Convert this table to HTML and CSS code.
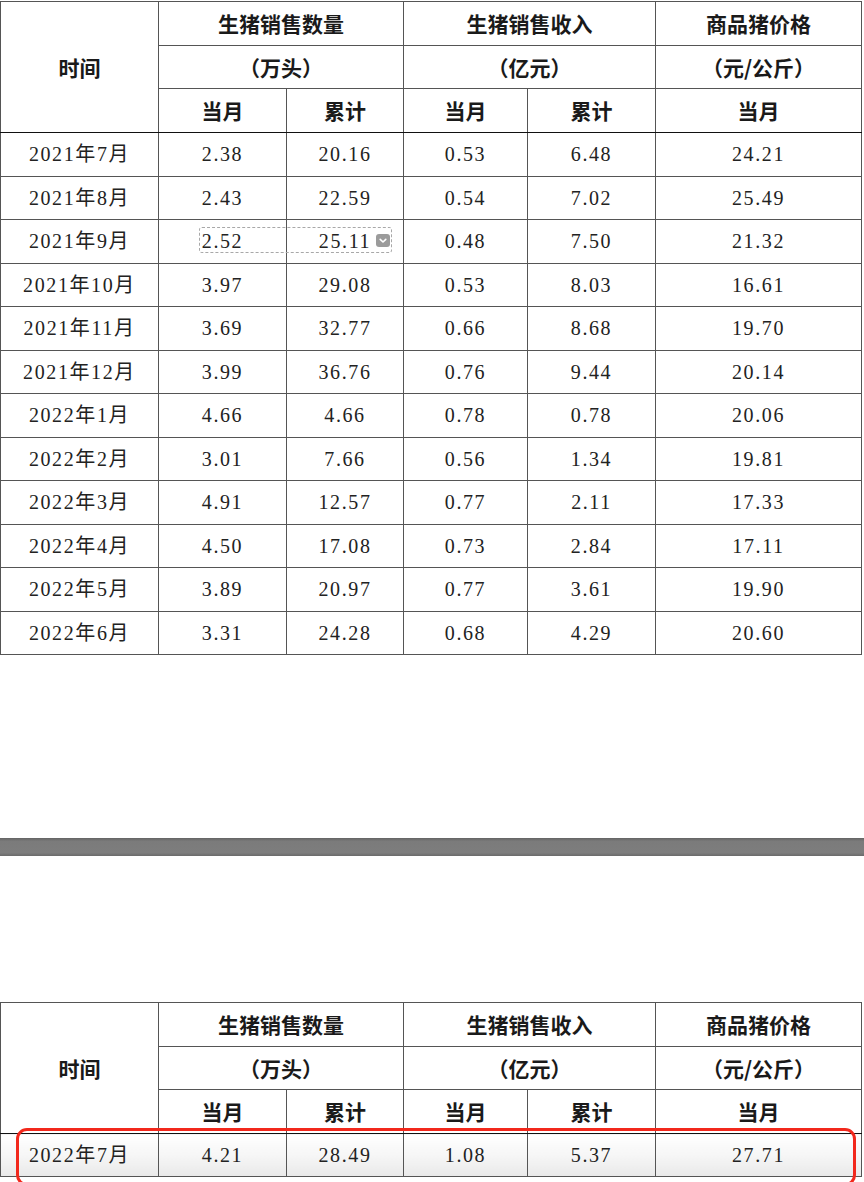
FILE: index.html
```html
<!DOCTYPE html>
<html lang="zh-CN">
<head>
<meta charset="utf-8">
<title>生猪销售情况</title>
<link rel="stylesheet" href="styles.css">
</head>
<body>
<div class="page">
  <div class="sheet sheet-top">
    <table class="grid">
      <colgroup>
        <col class="c-time"><col class="c-a"><col class="c-b"><col class="c-c"><col class="c-d"><col class="c-e">
      </colgroup>
      <thead>
        <tr class="h1"><th rowspan="3">时间</th><th colspan="2">生猪销售数量</th><th colspan="2">生猪销售收入</th><th>商品猪价格</th></tr>
        <tr class="h2"><th colspan="2">（万头）</th><th colspan="2">（亿元）</th><th>（元/公斤）</th></tr>
        <tr class="h3"><th>当月</th><th>累计</th><th>当月</th><th>累计</th><th>当月</th></tr>
      </thead>
      <tbody>
        <tr><td>2021年7月</td><td>2.38</td><td>20.16</td><td>0.53</td><td>6.48</td><td>24.21</td></tr>
        <tr><td>2021年8月</td><td>2.43</td><td>22.59</td><td>0.54</td><td>7.02</td><td>25.49</td></tr>
        <tr><td>2021年9月</td><td>2.52</td><td>25.11</td><td>0.48</td><td>7.50</td><td>21.32</td></tr>
        <tr><td>2021年10月</td><td>3.97</td><td>29.08</td><td>0.53</td><td>8.03</td><td>16.61</td></tr>
        <tr><td>2021年11月</td><td>3.69</td><td>32.77</td><td>0.66</td><td>8.68</td><td>19.70</td></tr>
        <tr><td>2021年12月</td><td>3.99</td><td>36.76</td><td>0.76</td><td>9.44</td><td>20.14</td></tr>
        <tr><td>2022年1月</td><td>4.66</td><td>4.66</td><td>0.78</td><td>0.78</td><td>20.06</td></tr>
        <tr><td>2022年2月</td><td>3.01</td><td>7.66</td><td>0.56</td><td>1.34</td><td>19.81</td></tr>
        <tr><td>2022年3月</td><td>4.91</td><td>12.57</td><td>0.77</td><td>2.11</td><td>17.33</td></tr>
        <tr><td>2022年4月</td><td>4.50</td><td>17.08</td><td>0.73</td><td>2.84</td><td>17.11</td></tr>
        <tr><td>2022年5月</td><td>3.89</td><td>20.97</td><td>0.77</td><td>3.61</td><td>19.90</td></tr>
        <tr><td>2022年6月</td><td>3.31</td><td>24.28</td><td>0.68</td><td>4.29</td><td>20.60</td></tr>
      </tbody>
    </table>
    <div class="select-box">
      <span class="dropdown"><svg viewBox="0 0 14 13" width="14" height="13"><path d="M4.2 5.3 L7 8 L9.8 5.3" fill="none" stroke="#fff" stroke-width="1.6" stroke-linecap="round" stroke-linejoin="round"/></svg></span>
    </div>
  </div>

  <div class="divider"></div>

  <div class="sheet sheet-bottom">
    <table class="grid">
      <colgroup>
        <col class="c-time"><col class="c-a"><col class="c-b"><col class="c-c"><col class="c-d"><col class="c-e">
      </colgroup>
      <thead>
        <tr class="h1"><th rowspan="3">时间</th><th colspan="2">生猪销售数量</th><th colspan="2">生猪销售收入</th><th>商品猪价格</th></tr>
        <tr class="h2"><th colspan="2">（万头）</th><th colspan="2">（亿元）</th><th>（元/公斤）</th></tr>
        <tr class="h3"><th>当月</th><th>累计</th><th>当月</th><th>累计</th><th>当月</th></tr>
      </thead>
      <tbody>
        <tr class="picked"><td>2022年7月</td><td>4.21</td><td>28.49</td><td>1.08</td><td>5.37</td><td>27.71</td></tr>
      </tbody>
    </table>
    <div class="highlight"></div>
  </div>
</div>
</body>
</html>
```

FILE: styles.css
```css
html, body {
  margin: 0;
  padding: 0;
  background: #ffffff;
}

.page {
  width: 864px;
  height: 1182px;
  overflow: hidden;
  display: flex;
  flex-direction: column;
}

.sheet {
  position: relative;
  width: 864px;
}

.sheet-top {
  padding-top: 1px;
}

.grid {
  width: 861px;
  table-layout: fixed;
  border-collapse: collapse;
  color: #1e1e1e;
}

.c-time { width: 158px; }
.c-a { width: 128px; }
.c-b { width: 117px; }
.c-c { width: 124px; }
.c-d { width: 128px; }
.c-e { width: 206px; }

.grid th,
.grid td {
  border: 1px solid #555555;
  padding: 0;
  text-align: center;
  vertical-align: middle;
}

.grid th {
  font-family: "Noto Sans CJK SC", "Noto Sans", sans-serif;
  font-weight: 700;
  font-size: 21px;
  line-height: 1;
  color: #1a1a1a;
}

.grid td {
  font-family: "Liberation Serif", "Noto Sans CJK SC", serif;
  font-size: 20px;
  letter-spacing: 1.6px;
  line-height: 1;
  color: #222222;
}

.grid tr.h1 { height: 44px; }
.grid tr.h2 { height: 43px; }
.grid tr.h3 { height: 44px; }
.grid tbody tr { height: 43.5px; }

.grid thead tr.h3 th,
.grid thead tr.h1 th:first-child {
  border-bottom: 1px solid #111111;
}

.select-box {
  position: absolute;
  left: 199px;
  top: 227px;
  width: 191px;
  height: 24px;
  border: 1px dashed #a8a8a8;
  border-radius: 3px;
}

.dropdown {
  position: absolute;
  right: 1px;
  top: 6px;
  width: 14px;
  height: 13px;
  border-radius: 3px;
  background: #9b9b9b;
  display: flex;
}

.divider {
  margin-top: 183px;
  height: 18px;
  width: 864px;
  background: linear-gradient(#646464, #7b7b7b 18%, #7d7d7d 82%, #6a6a6a);
  flex: none;
}

.sheet-bottom {
  margin-top: 146px;
}

.sheet-bottom .grid tbody tr { height: 43px; }

.grid tr.picked td {
  background: linear-gradient(#ffffff, #f6f6f6 50%, #e9e9e9);
}

.highlight {
  position: absolute;
  left: 16px;
  top: 126px;
  width: 834px;
  height: 52px;
  border: 3.5px solid #f2281c;
  border-radius: 11px;
}
```
